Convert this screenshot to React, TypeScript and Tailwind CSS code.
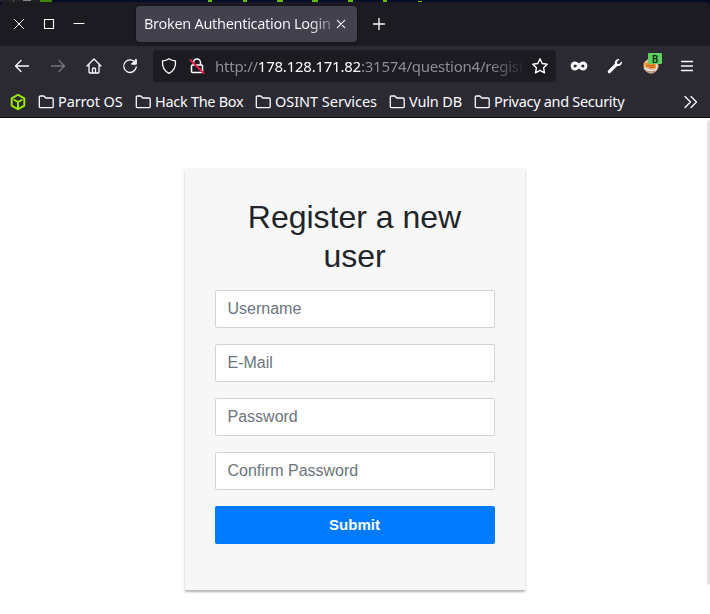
import React from "react";

const folders = [
  { name: "Parrot OS", width: "w-[97px]", tracking: "tracking-[-0.12px]" },
  { name: "Hack The Box", width: "w-[120px]", tracking: "tracking-[-0.29px]" },
  { name: "OSINT Services", width: "w-[134px]", tracking: "tracking-[-0.03px]" },
  { name: "Vuln DB", width: "w-[85px]", tracking: "tracking-[-0.15px]" },
  { name: "Privacy and Security", width: "w-[160px]", tracking: "tracking-[-0.3px]" },
];

const fields = ["Username", "E-Mail", "Password", "Confirm Password"];

function Icon({ className = "", children }: { className?: string; children: React.ReactNode }) {
  return (
    <svg viewBox="0 0 16 16" className={`h-4 w-4 shrink-0 overflow-visible ${className}`} fill="none" stroke="#fbfbfe" strokeWidth="1.3" strokeLinecap="round" strokeLinejoin="round">
      {children}
    </svg>
  );
}

function Wallpaper() {
  return (
    <svg className="block h-[2px] w-[710px]" viewBox="0 0 710 2" shapeRendering="crispEdges">
      <rect width="710" height="2" fill="#050c29" />
      <rect width="42" height="2" fill="#222226" />
      <rect x="13" width="1" height="2" fill="#55555a" />
      <rect x="23" width="8" height="1" fill="#85858a" />
      <rect x="40" width="12" height="2" fill="#3c8500" />
      <g fill="#61bd00">
        <rect x="208" width="4" height="2" />
        <rect x="243" width="4" height="2" />
        <rect x="277" width="6" height="2" />
        <rect x="312" width="6" height="2" />
        <rect x="348" width="5" height="2" />
        <rect x="383" width="4" height="2" />
        <rect x="418" y="1" width="4" height="1" />
      </g>
    </svg>
  );
}

function TabStrip() {
  return (
    <div className="flex h-[44px] items-center rounded-t-[5px] bg-[#1c1b22]">
      <Icon className="ml-[11px]"><path d="m3.5 3.5 9 9m0-9-9 9" strokeWidth="1" /></Icon>
      <Icon className="ml-[14px]"><path d="M3.5 3.5h9v9h-9z" strokeWidth="1.1" strokeLinejoin="miter" /></Icon>
      <Icon className="ml-[14px]"><path d="M3 7.5h10" strokeWidth="1.1" /></Icon>
      <div className="ml-[49px] flex h-[36px] w-[221px] items-center rounded-[4px] bg-[#42414d] pl-2 shadow-[0_0_3px_rgba(0,0,0,0.5)]">
        <span className="w-[187px] whitespace-nowrap bg-linear-to-r from-[#fbfbfe] from-88% to-[#85848e] bg-clip-text text-[14.5px] tracking-[-0.3px] text-transparent">Broken Authentication Login</span>
        <Icon className="ml-[2px]"><path d="m4.3 4.3 7.4 7.4m0-7.4-7.4 7.4" strokeWidth="1.1" /></Icon>
      </div>
      <Icon className="ml-[13.5px]"><path d="M8 2.5v11M2.5 8h11" /></Icon>
    </div>
  );
}

function AddressBar() {
  return (
    <div className="ml-[15px] flex h-[32px] w-[403px] items-center rounded-[4px] bg-[#1c1b22]">
      <Icon className="ml-[8px]"><path d="M8 .7c2 1.5 4 2 6.5 2.2.5 6-1.5 10-6.5 12.4C3 12.9 1 8.9 1.5 2.9 4 2.7 6 2.2 8 .7Z" /></Icon>
      <Icon className="ml-[12px]">
        <path d="M4.5 7V4.5a3.500 3.500 0 0 1 7 0V7M3.500 7h9q1 0 1 1v5.500q0 1-1 1h-9q-1 0-1-1V8q0-1 1-1Z" strokeWidth="1.5" />
        <path d="m1.500 2 13 13" stroke="#f01c50" strokeWidth="1.8" />
      </Icon>
      <div className="ml-[10px] w-[311px] whitespace-nowrap mask-r-from-88% text-[15px] tracking-[-0.24px] text-[#8d8c96]">
        http://<span className="text-[#fbfbfe]">178.128.171.82</span>:31574/question4/regist
      </div>
      <Icon className="ml-[6px]"><path d="m8 .8 2.200 4.700 5 .7-3.600 3.600.9 5L8 12.400l-4.500 2.400.9-5L.8 6.200l5-.7Z" strokeWidth="1.4" /></Icon>
    </div>
  );
}

function NavigationBar() {
  return (
    <div className="flex h-[40px] items-center">
      <Icon className="ml-[14px]"><path d="M14.500 8H1.500M7 2.500 1.500 8 7 13.500" /></Icon>
      <Icon className="ml-[20px]"><g stroke="#77767e"><path d="M1.500 8h13M9 2.500 14.500 8 9 13.500" /></g></Icon>
      <Icon className="ml-[19.5px]"><path d="M1 8 8 1l7 7M3 7v7q0 1 1 1h8q1 0 1-1V7M6.500 15v-4q0-1 1.500-1t1.500 1v4" /></Icon>
      <Icon className="ml-[20.5px]"><path d="M13.500 5A6.300 6.300 0 1 0 14.300 9M14 1.500v4.300H9.700" /><path d="M14 2v3.800h-3.800Z" fill="#fbfbfe" /></Icon>
      <AddressBar />
      <Icon className="ml-[15px]"><path stroke="#fbfbfe" strokeWidth="3" d="M8 8C6.700 6.100 5.700 4.900 4 4.900A2.900 3.100 0 0 0 4 11.100C5.700 11.100 6.700 9.900 8 8ZM8 8C9.300 6.100 10.300 4.900 12 4.900A2.900 3.100 0 0 1 12 11.100C10.300 11.100 9.300 9.900 8 8Z" /></Icon>
      <Icon className="ml-[20px]"><path fill="#fbfbfe" stroke="none" d="M14.800 3.300 12.200 5.900l-2-.1-.1-2L12.700 1C9.800.3 7.200 2.800 8 5.600L1.200 12.400a1.500 1.500 0 0 0 2.300 2.300l6.800-6.800c2.700.8 5.300-1.700 4.500-4.600Z" /></Icon>
      <div className="relative ml-[20px] h-4 w-4">
        <Icon>
          <circle cx="8" cy="8" r="7.2" fill="#c9c8c5" stroke="#e2a575" strokeWidth=".8" />
          <path d="m1.500 4.500 13 .5-1.500 6.500-10.500-2Z" fill="#f69232" stroke="#ffb66e" strokeWidth=".8" />
          <path d="m4 7.500 3 .5 4-.8M7 10l4-1" stroke="#9b4e1b" strokeWidth=".8" />
          <path d="m1.200 10.500 6.300 2.300 5.200-1M14 6l-1 5" stroke="#f2f2ee" strokeWidth=".9" />
          <path d="m4 13 4 1 4-1" stroke="#a66d46" strokeWidth=".7" />
        </Icon>
        <span className="absolute -top-[5px] left-[5px] flex h-[11px] w-[14px] items-center justify-center rounded-[1px] bg-[#5fce60] font-['Noto_Sans',sans-serif] text-[10px] leading-none font-semibold text-[#082908]">B</span>
      </div>
      <Icon className="ml-[20px]"><path d="M2.500 3.500h11m-11 4.500h11m-11 4.500h11" /></Icon>
    </div>
  );
}

function BookmarksBar() {
  return (
    <div className="flex h-[31px] items-center text-[14.5px] text-[#fbfbfe]">
      <Icon className="ml-[10px]"><path d="m8 .8 6.300 3.600v7.200L8 15.200l-6.300-3.600V4.400ZM4.300 6 8 8l3.700-2M8 8v6" stroke="#9fef00" strokeWidth="1.9" /></Icon>
      <div className="ml-[12px] flex items-center">
        {folders.map((folder) => (
          <div key={folder.name} className={`flex shrink-0 items-center gap-[4px] ${folder.width}`}>
            <Icon><path d="M2.500 2h3.300l2 2H14q1.200 0 1.200 1.200v7.300q0 1.200-1.200 1.200H2.500q-1.200 0-1.200-1.200V3.200Q1.300 2 2.500 2Z" /></Icon>
            <span className={`whitespace-nowrap ${folder.tracking}`}>{folder.name}</span>
          </div>
        ))}
      </div>
      <Icon className="ml-[49px]"><path d="m2 2.500 5.500 5.500L2 13.500m6-11L13.500 8 8 13.500" /></Icon>
    </div>
  );
}

export default function App() {
  return (
    <div className="h-[614px] w-[710px] overflow-hidden bg-white font-['Noto_Sans',sans-serif]">
      <header className="h-[118px] border-b border-[#0c0c0d] bg-[#2b2a33]">
        <div className="bg-[#050c29]"><Wallpaper /><TabStrip /></div>
        <NavigationBar />
        <BookmarksBar />
      </header>
      <main className="relative flex h-[496px] justify-center pt-[50px] font-['Liberation_Sans',sans-serif]">
        <form className="h-[422px] w-[340px] bg-[#f7f7f7] p-[30px] shadow-[0_2px_2px_rgba(0,0,0,0.3)]">
          <h2 className="mb-[14px] pr-px text-center text-[32px] leading-[39px] font-normal text-[#212529]">Register a new user</h2>
          <div className="flex flex-col gap-4">
            {fields.map((field) => (
              <input key={field} placeholder={field} className="h-[38px] w-full rounded-[2px] border border-[#ced4da] bg-white px-[11.5px] text-base placeholder:text-[#6c757d]" />
            ))}
            <button type="button" className="h-[38px] rounded-[2px] bg-[#007bff] pr-px text-[15px] font-bold text-white">Submit</button>
          </div>
        </form>
        <div className="absolute top-[2px] right-0 h-[465px] w-[3px] rounded-l-sm bg-[#e3e3e3]" />
      </main>
    </div>
  );
}
